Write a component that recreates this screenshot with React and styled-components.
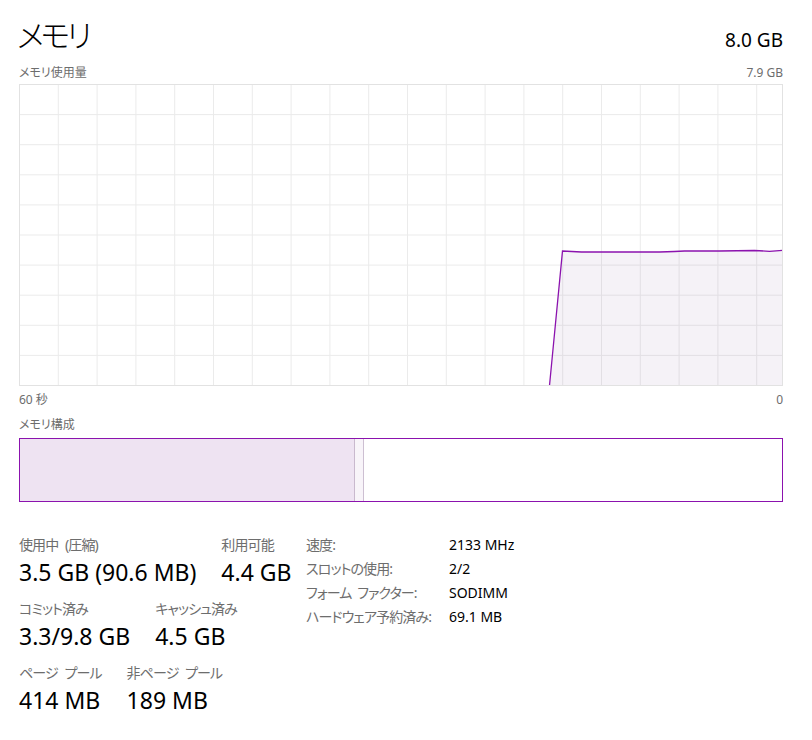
import React from "react";
import styled, { createGlobalStyle } from "styled-components";

const GlobalStyle = createGlobalStyle`
  html, body { margin: 0; padding: 0; background: #ffffff; }
  body {
    font-family: "Noto Sans", "Noto Sans CJK JP", sans-serif;
    font-feature-settings: "palt";
    color: #000;
  }
`;

const Page = styled.div`
  width: 812px;
  box-sizing: border-box;
  padding: 15px 29px 20px 19px;
`;

const Header = styled.div`
  display: flex;
  justify-content: space-between;
  align-items: baseline;
  height: 40px;
`;

const Title = styled.h1`
  margin: 0 0 0 -2px;
  font-weight: 300;
  font-size: 31px;
  line-height: 40px;
  letter-spacing: -3.5px;
  color: #000;
`;

const Capacity = styled.div`
  font-size: 19px;
  line-height: 40px;
  color: #000;
`;

const CaptionRow = styled.div`
  display: flex;
  justify-content: space-between;
  font-size: 12px;
  line-height: 16px;
  color: #6d6d6d;
  margin-top: ${(p) => p.$top || 0}px;
`;

const Caption = styled.div`
  font-size: 12px;
  line-height: 16px;
  color: #6d6d6d;
  margin-top: ${(p) => p.$top || 0}px;
`;

const ChartSvg = styled.svg`
  display: block;
  margin-top: 3px;
`;

const CompBar = styled.div`
  display: flex;
  box-sizing: border-box;
  height: 64px;
  margin-top: 5px;
  border: 1px solid #8b12ae;
  background: #fff;
`;

const Segment = styled.div`
  box-sizing: border-box;
  height: 100%;
  background: ${(p) => p.$bg};
  border-right: ${(p) => (p.$edge ? `1px solid ${p.$edge}` : "none")};
`;

const Stats = styled.div`
  display: flex;
  align-items: flex-start;
  margin-top: 33px;
`;

const LeftStats = styled.div`
  width: 287px;
  display: flex;
  flex-direction: column;
  gap: 12px;
`;

const StatRow = styled.div`
  display: flex;
  gap: 25px;
`;

const Stat = styled.div`
  display: flex;
  flex-direction: column;
  gap: 2px;
`;

const StatLabel = styled.div`
  font-size: 14px;
  line-height: 20px;
  letter-spacing: -0.9px;
  word-spacing: 4px;
  color: #6d6d6d;
  white-space: nowrap;
`;

const StatValue = styled.div`
  font-size: 23px;
  line-height: 30px;
  color: #000;
  white-space: nowrap;
`;

const InfoTable = styled.div`
  display: grid;
  grid-template-columns: 143px auto;
  grid-auto-rows: 24px;
  margin-top: -2px;
  font-size: 14px;
  line-height: 24px;
`;

const InfoLabel = styled.div`
  color: #6d6d6d;
  letter-spacing: -0.9px;
  word-spacing: 3px;
  white-space: nowrap;
`;

const InfoValue = styled.div`
  color: #000;
  white-space: nowrap;
`;

const W = 763;
const H = 301;

function UsageChart() {
  const vLines = [];
  for (let k = 1; k <= 19; k++) vLines.push(+(k * 38.8).toFixed(1));
  const hLines = [];
  for (let k = 1; k <= 9; k++) hLines.push(+(k * 30.1).toFixed(1));
  const pts = [
    [530, 301],
    [543, 166.5],
    [562, 167.5],
    [600, 167.5],
    [640, 167.5],
    [655, 167],
    [665, 166.5],
    [700, 166.5],
    [735, 166],
    [750, 166.8],
    [763, 165.8],
  ];
  const line = pts.map((p, i) => `${i ? "L" : "M"}${p[0]},${p[1]}`).join(" ");
  const area = `${line} L763,301 Z`;
  return (
    <ChartSvg width={W + 1} height={H + 1} viewBox={`-0.5 -0.5 ${W + 1} ${H + 1}`}>
      <rect x="0" y="0" width={W} height={H} fill="#fff" />
      {vLines.map((x) => (
        <line key={"v" + x} x1={x} y1="0" x2={x} y2={H} stroke="#ebebeb" strokeWidth="1" />
      ))}
      {hLines.map((y) => (
        <line key={"h" + y} x1="0" y1={y} x2={W} y2={y} stroke="#ebebeb" strokeWidth="1" />
      ))}
      <path d={area} fill="rgba(120, 70, 140, 0.07)" />
      <path d={line} fill="none" stroke="#8b12ae" strokeWidth="1.3" />
      <rect x="0" y="0" width={W} height={H} fill="none" stroke="#e2e2e2" strokeWidth="1" />
    </ChartSvg>
  );
}

const leftStats = [
  [
    ["使用中 (圧縮)", "3.5 GB (90.6 MB)"],
    ["利用可能", "4.4 GB"],
  ],
  [
    ["コミット済み", "3.3/9.8 GB"],
    ["キャッシュ済み", "4.5 GB"],
  ],
  [
    ["ページ プール", "414 MB"],
    ["非ページ プール", "189 MB"],
  ],
];

const info = [
  ["速度:", "2133 MHz"],
  ["スロットの使用:", "2/2"],
  ["フォーム ファクター:", "SODIMM"],
  ["ハードウェア予約済み:", "69.1 MB"],
];

export default function App() {
  return (
    <>
      <GlobalStyle />
      <Page>
        <Header>
          <Title>メモリ</Title>
          <Capacity>8.0 GB</Capacity>
        </Header>
        <CaptionRow $top={10}>
          <span>メモリ使用量</span>
          <span>7.9 GB</span>
        </CaptionRow>
        <UsageChart />
        <CaptionRow $top={6}>
          <span>60 秒</span>
          <span>0</span>
        </CaptionRow>
        <Caption $top={9}>メモリ構成</Caption>
        <CompBar>
          <Segment style={{ width: 335 }} $bg="#eee3f2" $edge="#c9b9ce" />
          <Segment style={{ width: 9 }} $bg="#f8f4f9" $edge="#cdbfd2" />
        </CompBar>
        <Stats>
          <LeftStats>
            {leftStats.map((row, i) => (
              <StatRow key={i}>
                {row.map(([label, value]) => (
                  <Stat key={label}>
                    <StatLabel>{label}</StatLabel>
                    <StatValue>{value}</StatValue>
                  </Stat>
                ))}
              </StatRow>
            ))}
          </LeftStats>
          <InfoTable>
            {info.map(([label, value]) => (
              <React.Fragment key={label}>
                <InfoLabel>{label}</InfoLabel>
                <InfoValue>{value}</InfoValue>
              </React.Fragment>
            ))}
          </InfoTable>
        </Stats>
      </Page>
    </>
  );
}
